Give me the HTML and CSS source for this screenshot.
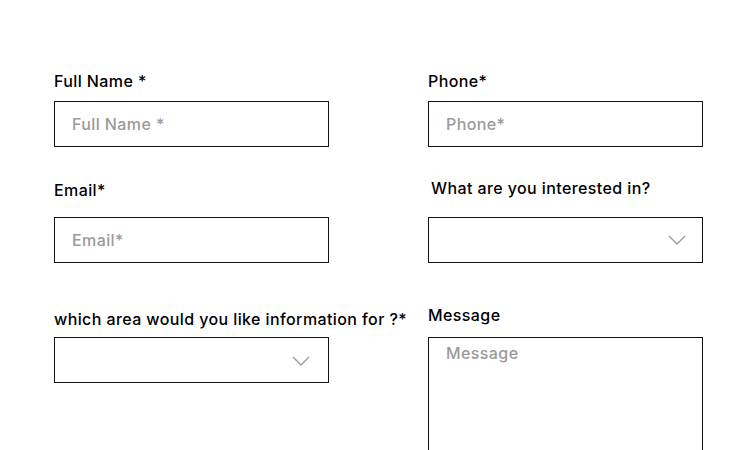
FILE: index.html
```html
<!DOCTYPE html>
<html lang="en">
<head>
<meta charset="utf-8">
<title>Contact form</title>
<link rel="stylesheet" href="styles.css">
</head>
<body>
<form class="form">
  <div class="field f-name">
    <label class="label">Full Name *</label>
    <div class="box"><span class="ph">Full Name *</span></div>
  </div>
  <div class="field f-phone">
    <label class="label">Phone*</label>
    <div class="box"><span class="ph">Phone*</span></div>
  </div>
  <div class="field f-email">
    <label class="label">Email*</label>
    <div class="box"><span class="ph">Email*</span></div>
  </div>
  <div class="field f-interest">
    <label class="label label-indent">What are you interested in?</label>
    <div class="box select">
      <svg class="chev" width="18" height="10" viewBox="0 0 18 10"><polyline points="1,1 9,9 17,1" fill="none" stroke="#9a9a9a" stroke-width="1.3"/></svg>
    </div>
  </div>
  <div class="field f-area">
    <label class="label">which area would you like information for ?*</label>
    <div class="box select">
      <svg class="chev" width="18" height="10" viewBox="0 0 18 10"><polyline points="1,1 9,9 17,1" fill="none" stroke="#9a9a9a" stroke-width="1.3"/></svg>
    </div>
  </div>
  <div class="field f-message">
    <label class="label">Message</label>
    <div class="box textarea"><span class="ph">Message</span></div>
  </div>
</form>
</body>
</html>
```

FILE: styles.css
```css
html, body {
  margin: 0;
  padding: 0;
  background: #ffffff;
  overflow: hidden;
}
body {
  font-family: "Inter", "Open Sans", sans-serif;
  color: #000;
}
.form {
  display: grid;
  grid-template-columns: 275px 275px;
  column-gap: 99px;
  align-items: start;
  padding: 71px 0 0 54px;
}
.field {
  display: flex;
  flex-direction: column;
}
.label {
  display: block;
  height: 20px;
  line-height: 20px;
  font-size: 16px;
  font-weight: 500;
  letter-spacing: 0.4px;
  white-space: nowrap;
}
.label-indent { padding-left: 3px; }
.box {
  box-sizing: border-box;
  width: 275px;
  height: 46px;
  border: 1px solid #111;
  display: flex;
  align-items: center;
  padding-left: 17px;
}
.ph {
  color: #9a9a9a;
  font-size: 16px;
  font-weight: 500;
  letter-spacing: 0.4px;
}
.select {
  justify-content: flex-end;
  padding-right: 16px;
}
.chev { display: block; }
.textarea {
  height: 140px;
  align-items: flex-start;
  padding-top: 5px;
}
.f-name .label, .f-phone .label { margin-bottom: 10px; }
.f-email { margin-top: 33px; }
.f-email .label { margin-bottom: 17px; }
.f-interest { margin-top: 31px; }
.f-interest .label { margin-bottom: 19px; }
.f-area { margin-top: 46px; }
.f-area .label { margin-bottom: 8px; }
.f-area .chev { margin-right: 2px; margin-top: 2px; }
.f-message { margin-top: 42px; }
.f-message .label { margin-bottom: 12px; }
```
